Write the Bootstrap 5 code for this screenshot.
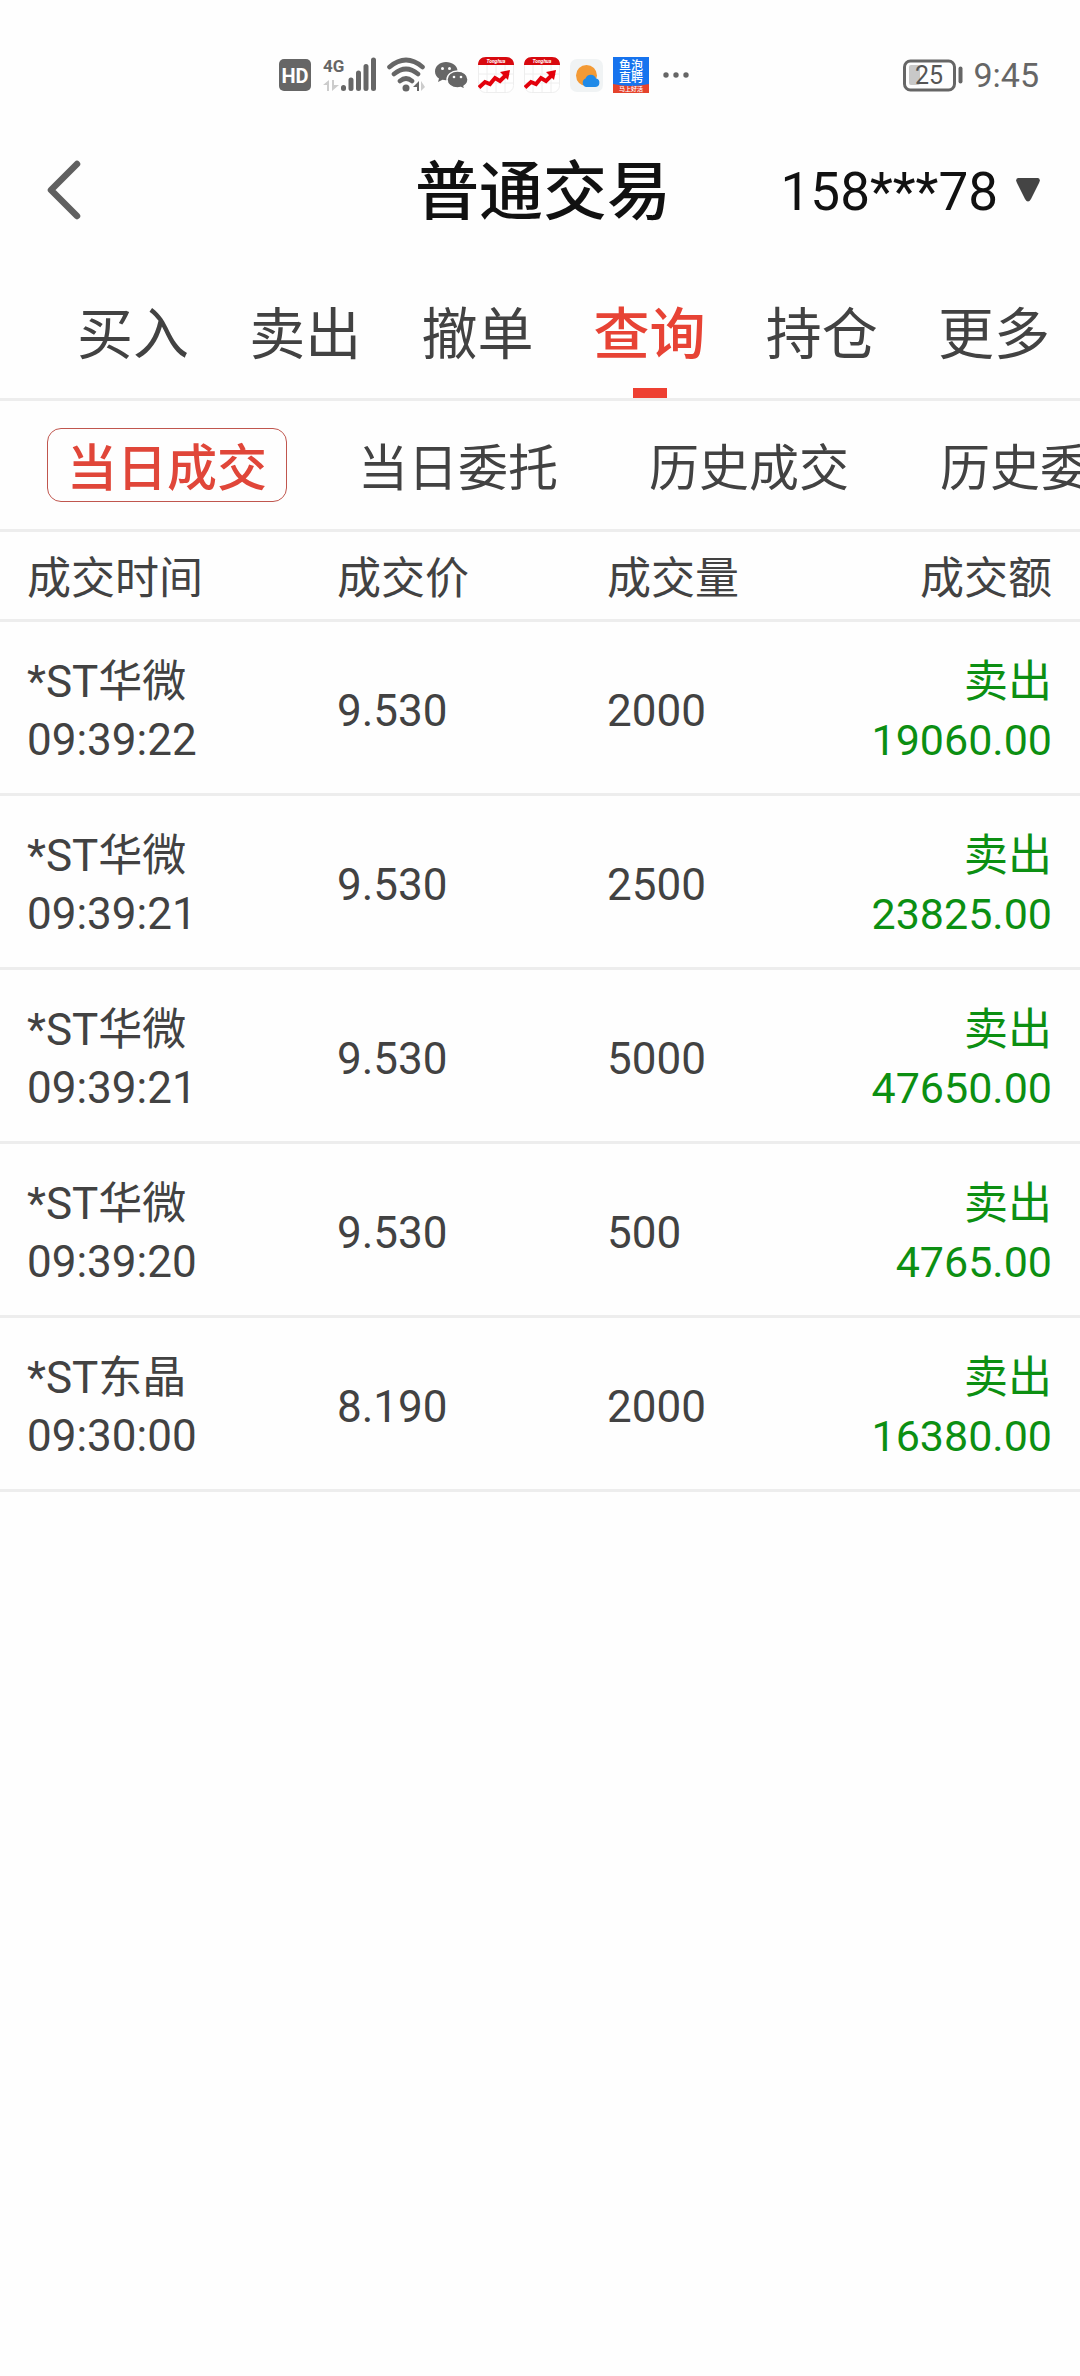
<!DOCTYPE html>
<html lang="zh-CN">
<head>
<meta charset="utf-8">
<meta name="viewport" content="width=device-width, initial-scale=1">
<title>普通交易</title>
<link href="https://cdn.jsdelivr.net/npm/bootstrap@5.3.0/dist/css/bootstrap.min.css" rel="stylesheet">
<style>
  body { font-family: Roboto, "Noto Sans CJK SC", sans-serif; color: #424242; background: #fefefe; }
  .status-bar { height: 118px; padding: 32px 41px 0 279px; color: #666; }
  .status-icons { gap: 10px; }
  .status-icons svg, .status-power svg { display: block; flex: none; }
  .status-power { gap: 9px; font-size: 34px; line-height: 36px; }
  .title-bar { display: grid; grid-template-columns: 1fr auto 1fr; height: 144px; padding: 0 40px 0 46px; color: #111; }
  .title-bar h1 { padding-top: 6px; font-size: 64px; line-height: 72px; font-weight: 500; }
  .account { gap: 18px; font-size: 53px; line-height: 60px; color: #111; }
  .account span { padding-top: 4px; }
  .main-tabs { height: 139px; padding-left: 47px; border-bottom: 3px solid #ededed; }
  .main-tabs .nav-link { position: relative; height: 136px; padding: 10px 0 0; font-size: 56px; line-height: 126px; color: #424242; }
  .main-tabs .nav-link.active { color: #e74335; font-weight: 500; }
  .main-tabs .nav-link.active::after { content: ""; position: absolute; left: 50%; bottom: 0; width: 34px; height: 10px; margin-left: -17px; background: #ee4032; }
  .sub-tabs { gap: 51px; height: 131px; padding: 0 47px; border-bottom: 3px solid #ededed; overflow: hidden; }
  .sub-tabs .btn { flex: none; padding: 8px 19px 0; font-size: 50px; line-height: 64px; color: #424242; border: 1px solid transparent; border-radius: 14px; }
  .sub-tabs .btn.active { color: #e04639; border-color: #c0564e; background: transparent; font-weight: 500; }
  .deals { table-layout: fixed; font-size: 44px; line-height: 58px; color: #424242; }
  .deals th, .deals td { padding: 31px 0 24px; border-bottom: 3px solid #ededed; vertical-align: middle; font-weight: 400; }
  .deals th { padding: 18px 0 11px; }
  .deals tr > :first-child { width: 31.2%; padding-left: 27px; }
  .deals tr > :nth-child(2) { width: 25%; }
  .deals tr > :nth-child(3) { width: 18%; }
  .deals tr > :last-child { padding-right: 28px; text-align: right; }
  .deals td:last-child { color: #0c8f12; }
  .deals .amount { font-size: 43px; }
</style>
<script src="https://cdn.jsdelivr.net/npm/bootstrap@5.3.0/dist/js/bootstrap.bundle.min.js"></script>
</head>
<body>
<div class="status-bar d-flex justify-content-between">
  <div class="status-icons d-flex align-items-center">
    <svg width="34" height="36" viewBox="0 0 34 36"><rect y="2" width="32" height="32" rx="5" fill="#666"/><text x="16" y="26" text-anchor="middle" font-family="Roboto" font-weight="700" font-size="20" fill="#fff">HD</text></svg>
    <svg width="54" height="36" viewBox="0 0 54 36"><text x="0" y="15" font-family="Roboto" font-weight="700" font-size="17" fill="#666">4G</text><path d="M0 28l6-5v11H4v-6zM9 23v11l7-6h-5v-5z" fill="#ccc"/><path d="M20.500 30.500v1M28 23v8.500M35.500 16v15.500M43 9.500v22M50.500 3v28.500" stroke="#666" stroke-width="5" stroke-linecap="round"/></svg>
    <svg width="38" height="36" viewBox="0 0 38 36"><g fill="none" stroke="#666" stroke-width="4.600" stroke-linecap="round"><path d="M2.500 10Q19-4 35.500 10M7 17Q19 7 31 17M13 24Q19 19 25 24"/></g><circle cx="19" cy="31" r="3.500" fill="#666"/><path d="M26 30l6-6v10h-2v-4z" fill="#666"/><path d="M34 24v10l4-4z" fill="#ccc"/></svg>
    <svg width="33" height="36" viewBox="0 0 33 36"><path d="M11 5C5 5 0 9 0 14.500c0 3 1.600 5.500 4 7L3 25l4.500-2.200c1.200.3 2.300.5 3.500.5C17 23.300 22.500 19.500 22.500 14S17 5 11 5z" fill="#666"/><path d="M22.500 14C16.500 14 12 17.700 12 22.500S16.500 31 22.500 31c1.200 0 2.300-.2 3.300-.5L30 32.500l-1-3.300c2.500-1.600 4-4 4-6.700C33 17.700 28.500 14 22.500 14z" fill="#666" stroke="#fefefe" stroke-width="1.400"/><g fill="#fefefe"><circle cx="7.500" cy="11.500" r="1.500"/><circle cx="14.500" cy="11.500" r="1.500"/><circle cx="19" cy="20" r="1.300"/><circle cx="26" cy="20" r="1.300"/></g></svg>
    <svg width="36" height="36" viewBox="0 0 36 36"><rect x=".5" y=".5" width="35" height="35" rx="7" fill="#fff" stroke="#eee"/><path d="M9 8v27M18 8v27M27 8v27M1 17h34M1 26h34" stroke="#eee"/><path d="M0 8C0 3 3 0 8 0h20c5 0 8 3 8 8z" fill="#d8090f"/><text x="18" y="6" text-anchor="middle" font-family="Roboto" font-size="5" font-weight="700" font-style="italic" fill="#fff">Tonghua</text><path d="M1 30.500l6-5.500 5 2 5-6 5 3 8-8" fill="none" stroke="#e3000b" stroke-width="4"/><path d="M22 15l10-2-2 10z" fill="#e3000b"/></svg>
    <svg width="36" height="36" viewBox="0 0 36 36"><rect x=".5" y=".5" width="35" height="35" rx="7" fill="#fff" stroke="#eee"/><path d="M9 8v27M18 8v27M27 8v27M1 17h34M1 26h34" stroke="#eee"/><path d="M0 8C0 3 3 0 8 0h20c5 0 8 3 8 8z" fill="#d8090f"/><text x="18" y="6" text-anchor="middle" font-family="Roboto" font-size="5" font-weight="700" font-style="italic" fill="#fff">Tonghua</text><path d="M1 30.500l6-5.500 5 2 5-6 5 3 8-8" fill="none" stroke="#e3000b" stroke-width="4"/><path d="M22 15l10-2-2 10z" fill="#e3000b"/></svg>
    <svg width="33" height="36" viewBox="0 0 33 36"><rect y="2" width="33" height="33" rx="7" fill="#f0f3f4"/><circle cx="16.500" cy="18.500" r="10.500" fill="#f39a35"/><path d="M16 30a4.500 4.500 0 0 1-.5-8.500 5.500 5.500 0 0 1 10.500 0A4.300 4.300 0 0 1 25 30z" fill="#1f8ae8"/></svg>
    <svg width="36" height="36" viewBox="0 0 36 36"><rect width="36" height="36" fill="#1673ee"/><path d="M0 27q18 4 36 0v9H0z" fill="#e5432c"/><g fill="#fff" text-anchor="middle" font-family="Noto Sans CJK SC" font-weight="500"><text x="18" y="13" font-size="12">鱼泡</text><text x="18" y="25" font-size="12">直聘</text><text x="18" y="34" font-size="6">马上好活</text></g></svg>
    <svg width="30" height="36" viewBox="0 0 30 36" fill="#666"><circle cx="7" cy="18" r="2.700"/><circle cx="17" cy="18" r="2.700"/><circle cx="27" cy="18" r="2.700"/></svg>
  </div>
  <div class="status-power d-flex align-items-center">
    <svg width="61" height="36" viewBox="0 0 61 36"><rect x="1.500" y="4" width="50" height="29" rx="6" fill="none" stroke="#666" stroke-width="3"/><rect x="6" y="8" width="11" height="20" rx="2" fill="#c8c8c8"/><path d="M57.500 11.500v13" stroke="#666" stroke-width="4" stroke-linecap="round"/><text x="26" y="27" text-anchor="middle" font-family="Roboto" font-size="25" fill="#555">25</text></svg>
    <span>9:45</span>
  </div>
</div>

<header class="title-bar align-items-center">
  <a href="#" aria-label="返回"><svg class="d-block" width="42" height="60" viewBox="0 0 42 60"><path d="M31 4L5 30L31 56" fill="none" stroke="#606060" stroke-width="6.500" stroke-linecap="round" stroke-linejoin="round"/></svg></a>
  <h1 class="m-0">普通交易</h1>
  <button type="button" class="account btn border-0 p-0 d-flex align-items-center justify-content-end"><span>158***78</span><svg width="24" height="24" viewBox="0 0 24 24"><path d="M2 0h20q3 1 1 5L15 21q-3 5-6 0L1 5q-2-4 1-5z" fill="#444"/></svg></button>
</header>

<nav class="main-tabs nav nav-justified flex-nowrap">
  <a class="nav-link" href="#">买入</a>
  <a class="nav-link" href="#">卖出</a>
  <a class="nav-link" href="#">撤单</a>
  <a class="nav-link active" href="#" aria-current="page">查询</a>
  <a class="nav-link" href="#">持仓</a>
  <a class="nav-link" href="#">更多</a>
</nav>

<div class="sub-tabs d-flex align-items-center">
  <button type="button" class="btn active">当日成交</button>
  <button type="button" class="btn">当日委托</button>
  <button type="button" class="btn">历史成交</button>
  <button type="button" class="btn">历史委托</button>
</div>

<table class="deals w-100">
  <thead><tr><th>成交时间</th><th>成交价</th><th>成交量</th><th>成交额</th></tr></thead>
  <tbody>
    <tr><td>*ST华微<br>09:39:22</td><td>9.530</td><td>2000</td><td>卖出<br><span class="amount">19060.00</span></td></tr>
    <tr><td>*ST华微<br>09:39:21</td><td>9.530</td><td>2500</td><td>卖出<br><span class="amount">23825.00</span></td></tr>
    <tr><td>*ST华微<br>09:39:21</td><td>9.530</td><td>5000</td><td>卖出<br><span class="amount">47650.00</span></td></tr>
    <tr><td>*ST华微<br>09:39:20</td><td>9.530</td><td>500</td><td>卖出<br><span class="amount">4765.00</span></td></tr>
    <tr><td>*ST东晶<br>09:30:00</td><td>8.190</td><td>2000</td><td>卖出<br><span class="amount">16380.00</span></td></tr>
  </tbody>
</table>
</body>
</html>
